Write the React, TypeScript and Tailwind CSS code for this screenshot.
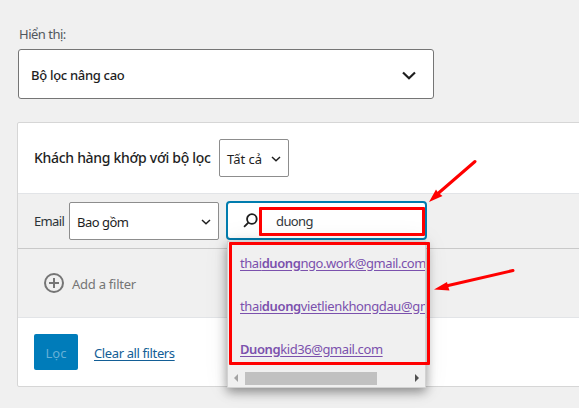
import React from "react";

function Chevron({ className, width = 1.8 }: { className: string; width?: number }) {
  return (
    <svg viewBox="0 0 14 9" className={className} fill="none" stroke="currentColor" strokeWidth={width}>
      <path d="M1 1.5 7 7.2l6-5.7" />
    </svg>
  );
}

function EmailOption({ before, match, after, className }: { before: string; match: string; after: string; className: string }) {
  return (
    <li className="flex h-[43px] items-center">
      <a href="#" className={`whitespace-nowrap text-[#7b51ad] underline underline-offset-2 ${className}`}>
        {before}
        <span className="font-semibold">{match}</span>
        {after}
      </a>
    </li>
  );
}

function Suggestions() {
  return (
    <div className="absolute left-px top-[40px] h-[147px] w-[199px] border border-[#d2d2d2] bg-[#f0f0f0] shadow-[0_4px_10px_rgba(0,0,0,0.4),0_0_24px_rgba(0,0,0,0.08)]">
      <ul className="-mt-px h-[129px] overflow-hidden pl-3 text-[13px]">
        <EmailOption before="thai" match="duong" after="ngo.work@gmail.com" className="tracking-[-0.43px]" />
        <EmailOption before="thai" match="duong" after="vietlienkhongdau@gmail.com" className="tracking-[-0.38px]" />
        <EmailOption before="" match="Duong" after="kid36@gmail.com" className="tracking-[-0.42px]" />
      </ul>
      <div className="flex h-4 items-center pl-[6px] pr-[6px]">
        <svg viewBox="0 0 4 8" className="h-2 w-1" fill="#a3a3a3"><path d="M4 0v8L0 4z" /></svg>
        <div className="ml-[7px] h-[13px] w-[132px] bg-[#c1c1c1]" />
        <svg viewBox="0 0 4 8" className="ml-auto h-2 w-1" fill="#505050"><path d="M0 0v8l4-4z" /></svg>
      </div>
    </div>
  );
}

export default function App() {
  return (
    <div className="relative h-[408px] w-[579px] overflow-hidden bg-[#f0f0f0] font-['Noto_Sans','Open_Sans',sans-serif] text-[13px] leading-5 text-[#1e1e1e]">
      <div className="pl-[18px] pt-6">
        <div className="h-[25px] pl-px text-[13px] tracking-[-0.5px] text-[#50575e]">Hiển thị:</div>
        <div className="flex h-[50px] w-[416px] items-center justify-between rounded-[3px] border border-[#757575] bg-white pl-3 pr-[17px] pt-[2px]">
          <span className="whitespace-nowrap text-[13px] font-medium tracking-[-0.3px]">Bộ lọc nâng cao</span>
          <Chevron className="h-[9px] w-[14px]" width={2.2} />
        </div>
      </div>

      <div className="ml-[17px] mt-[23px] h-[265px] w-[600px] rounded-[2px] border border-[#d6d6d6] bg-white">
        <div className="flex h-[71px] items-center border-b border-[#e2e4e7] pl-4">
          <span className="w-[185px] whitespace-nowrap text-[14px] font-medium tracking-[-0.3px]">Khách hàng khớp với bộ lọc</span>
          <div className="flex h-[38px] w-[70px] items-center justify-between rounded-[2px] border border-[#8d8d8d] pl-[7px] pr-[7px] pt-px">
            <span className="whitespace-nowrap">Tất cả</span>
            <Chevron className="h-[6px] w-[10px]" width={2.2} />
          </div>
        </div>

        <div className="flex h-[55px] items-center border-b border-[#c9c9c9] bg-[#f0f0f0] pl-4">
          <span className="w-[35px] tracking-[-0.65px] text-[#2c3338]">Email</span>
          <div className="flex h-[38px] w-[150px] items-center justify-between rounded-[2px] border border-[#8d8d8d] bg-white pl-[7px] pr-[7px] pt-px">
            <span className="whitespace-nowrap tracking-[-0.5px]">Bao gồm</span>
            <Chevron className="h-[6px] w-[10px]" width={2.2} />
          </div>
          <div className="relative ml-[7px] mt-[7px] h-[39px] w-[201px] self-start">
            <div className="flex h-full items-center rounded-[4px] border-2 border-[#007cae] bg-white pl-[15px]">
              <svg viewBox="0 0 14 14" className="h-[15px] w-[15px]" fill="none" stroke="#1e1e1e" strokeWidth="1.7">
                <circle cx="8.3" cy="5.6" r="4.5" />
                <path d="m5 9-4 4" />
              </svg>
              <span className="ml-[18px] tracking-[-0.6px] text-[#32373c]">duong</span>
            </div>
            <Suggestions />
          </div>
        </div>

        <div className="flex h-[69px] items-center border-b border-[#e2e4e7] bg-[#f0f0f0] pl-[26px] text-[#757575]">
          <svg viewBox="0 0 20 20" className="h-5 w-5" fill="none" stroke="currentColor" strokeWidth="2">
            <circle cx="10" cy="10" r="9" />
            <path d="M10 5v10M5 10h10" />
          </svg>
          <span className="ml-2 pt-px tracking-[-0.25px]">Add a filter</span>
        </div>

        <div className="flex h-[68px] items-center pl-4">
          <button className="h-9 w-11 rounded-[2px] bg-[#007cba] pt-px text-[#66b0d6]">Lọc</button>
          <a href="#" className="ml-4 whitespace-nowrap pt-px tracking-[-0.38px] text-[#135e96] underline underline-offset-2">Clear all filters</a>
        </div>
      </div>

      <div className="absolute left-[259px] top-[207px] h-[29px] w-[166px] rounded-[1px] border-[3px] border-[#ff0000]" />
      <div className="absolute left-[229px] top-[242px] h-[123px] w-[201px] rounded-[1px] border-[3px] border-[#ff0000]" />
      <svg className="absolute left-0 top-0" width="579" height="408" fill="#ff0000" stroke="#ff0000">
        <path d="M475 161.500 438 193.500M513 270.500 446 286" strokeWidth="3" strokeLinecap="round" fill="none" />
        <path d="M429 202 436 189.500 438 192.500 442.500 196ZM434 289.500 447 282 448 286 449.500 290.500Z" stroke="none" />
      </svg>
    </div>
  );
}
